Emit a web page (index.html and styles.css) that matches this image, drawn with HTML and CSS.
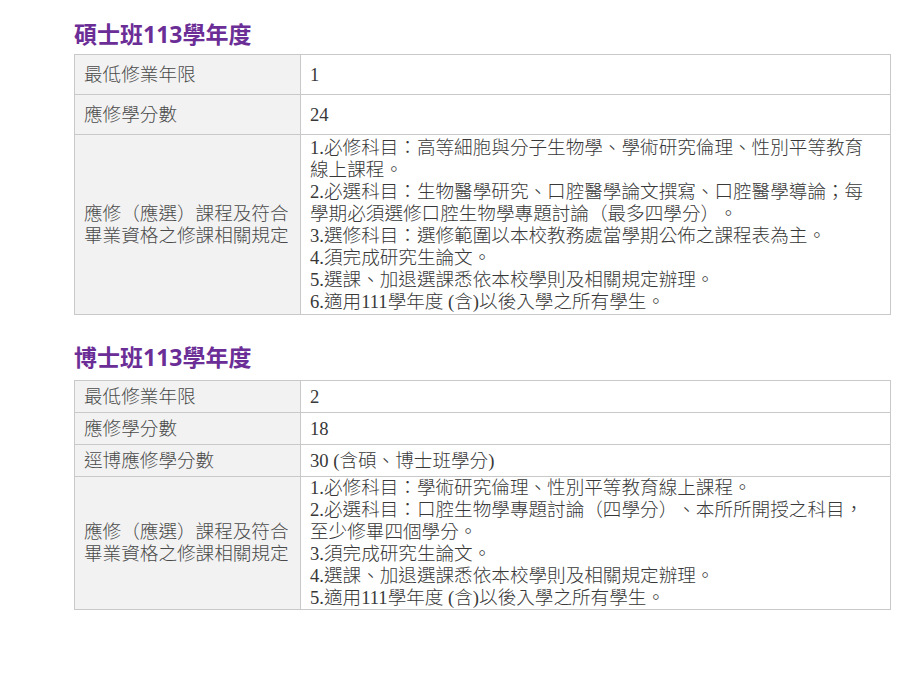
FILE: index.html
```html
<!DOCTYPE html>
<html lang="zh-Hant">
<head>
<meta charset="utf-8">
<title>修業規定</title>
<link rel="stylesheet" href="styles.css">
</head>
<body>
<main class="page">
  <section class="block block-master">
    <h2 class="title">碩士班113學年度</h2>
    <table class="rules">
      <tr class="short">
        <td class="label">最低修業年限</td>
        <td class="value">1</td>
      </tr>
      <tr class="short">
        <td class="label">應修學分數</td>
        <td class="value">24</td>
      </tr>
      <tr class="tall">
        <td class="label">應修（應選）課程及符合<br>畢業資格之修課相關規定</td>
        <td class="value">1.必修科目：高等細胞與分子生物學、學術研究倫理、性別平等教育<br>線上課程。<br>2.必選科目：生物醫學研究、口腔醫學論文撰寫、口腔醫學導論；每<br>學期必須選修口腔生物學專題討論（最多四學分）。<br>3.選修科目：選修範圍以本校教務處當學期公佈之課程表為主。<br>4.須完成研究生論文。<br>5.選課、加退選課悉依本校學則及相關規定辦理。<br>6.適用111學年度 (含)以後入學之所有學生。</td>
      </tr>
    </table>
  </section>

  <section class="block block-phd">
    <h2 class="title">博士班113學年度</h2>
    <table class="rules">
      <tr class="short">
        <td class="label">最低修業年限</td>
        <td class="value">2</td>
      </tr>
      <tr class="short">
        <td class="label">應修學分數</td>
        <td class="value">18</td>
      </tr>
      <tr class="short">
        <td class="label">逕博應修學分數</td>
        <td class="value">30 (含碩、博士班學分)</td>
      </tr>
      <tr class="tall">
        <td class="label">應修（應選）課程及符合<br>畢業資格之修課相關規定</td>
        <td class="value">1.必修科目：學術研究倫理、性別平等教育線上課程。<br>2.必選科目：口腔生物學專題討論（四學分）、本所所開授之科目，<br>至少修畢四個學分。<br>3.須完成研究生論文。<br>4.選課、加退選課悉依本校學則及相關規定辦理。<br>5.適用111學年度 (含)以後入學之所有學生。</td>
      </tr>
    </table>
  </section>
</main>
</body>
</html>
```

FILE: styles.css
```css
html, body {
  margin: 0;
  padding: 0;
  background: #ffffff;
}

.page {
  padding: 19px 0 0 74px;
  width: 817px;
}

.title {
  margin: 0;
  height: 30px;
  line-height: 30px;
  font-family: "Open Sans", "Noto Sans CJK TC", sans-serif;
  font-weight: 700;
  font-size: 23px;
  color: #6b2d96;
  letter-spacing: 0;
}

.block-master .title {
  margin-bottom: 5px;
}

.block-phd {
  margin-top: 27px;
}

.block-phd .title {
  margin-bottom: 8px;
}

.rules {
  width: 817px;
  border-collapse: collapse;
  font-family: "Liberation Serif", "Noto Sans CJK TC", serif;
  font-size: 18.6px;
  line-height: 22px;
  color: #383838;
  text-spacing-trim: space-all;
}

.rules td {
  border: 1px solid #c9c9c9;
  padding: 0 9px;
  vertical-align: middle;
  text-align: left;
  font-weight: 300;
}

.rules .label {
  width: 207px;
  background: #f2f2f2;
  color: #4a4a4a;
}

.rules .value {
  background: #ffffff;
  white-space: nowrap;
}

.block-master .short td {
  padding-top: 9px;
  padding-bottom: 8px;
}

.block-master .tall td {
  padding-top: 2px;
  padding-bottom: 1px;
}

.block-phd .short td {
  padding-top: 5px;
  padding-bottom: 4px;
}

.block-phd .tall td {
  padding-top: 0;
  padding-bottom: 0;
}
```
